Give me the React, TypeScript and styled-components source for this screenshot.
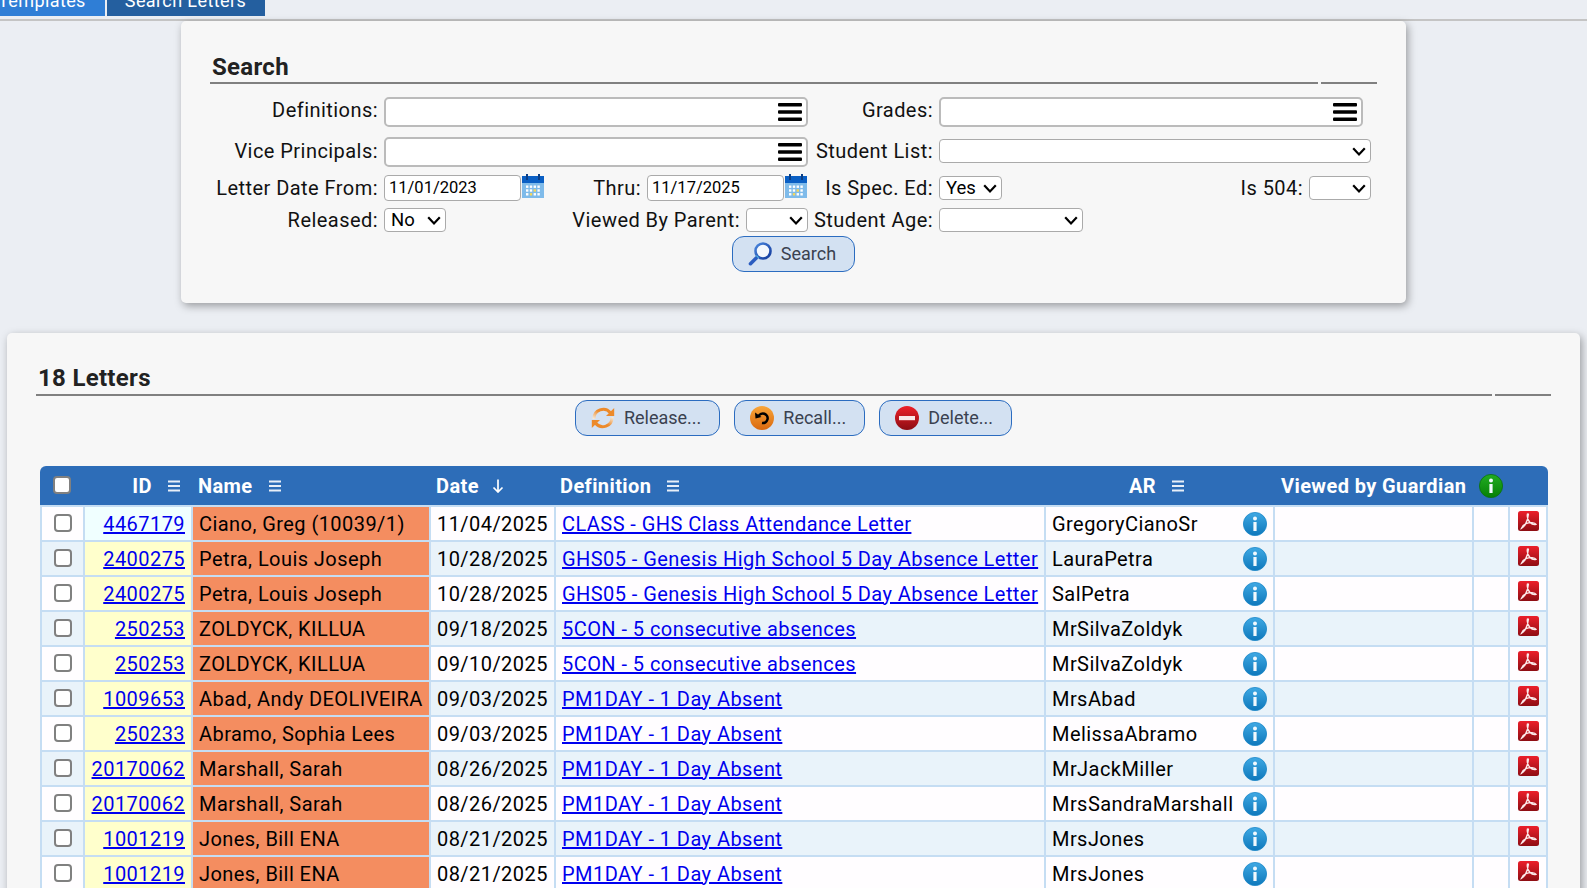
import React from "react";
import styled, { createGlobalStyle } from "styled-components";

const Global = createGlobalStyle`
  html, body { margin: 0; padding: 0; height: 100%; overflow: hidden; background: #ebeef3; }
  body { font-family: Roboto, "Liberation Sans", sans-serif; color: #000; }
  #root { height: 100%; overflow: hidden; }
`;

const chevron =
  "data:image/svg+xml;utf8,<svg xmlns='http://www.w3.org/2000/svg' width='14' height='9' viewBox='0 0 14 9'><path d='M1.2 1.2L7 7.4L12.8 1.2' fill='none' stroke='%23000' stroke-width='2.2'/></svg>";

const TopBar = styled.div`
  display: flex;
  height: 19px;
  gap: 2px;
  margin-left: -20px;
  border-bottom: 2px solid #c4c4c4;
`;
const Tab = styled.div<{ $dark?: boolean }>`
  height: 16px;
  overflow: hidden;
  display: flex;
  align-items: flex-end;
  padding: 0 19px 6px 18px;
  box-sizing: border-box;
  font-size: 18px;
  line-height: 18px;
  letter-spacing: 0.4px;
  color: #fff;
  background: ${(p) => (p.$dark ? "#245f9f" : "#2f7ed6")};
`;
const Panel = styled.section<{ $wide?: boolean }>`
  box-sizing: border-box;
  background: #f7f7f7;
  border-radius: 5px;
  padding: 0 29px;
  box-shadow: 2px 3px 8px rgba(0, 0, 0, 0.35);
  margin: ${(p) => (p.$wide ? "30px 7px 0" : "0 auto")};
  width: ${(p) => (p.$wide ? "auto" : "1225px")};
  height: ${(p) => (p.$wide ? "700px" : "282px")};
`;
const TitleRow = styled.div`
  display: flex;
  gap: 3px;
  height: 63px;
`;
const Title = styled.h2<{ $top: number }>`
  flex: 1;
  margin: 0;
  box-sizing: border-box;
  height: 63px;
  padding: ${(p) => p.$top}px 0 0 2px;
  font-size: 24px;
  line-height: 30px;
  font-weight: 700;
  letter-spacing: 0.3px;
  color: #222;
  border-bottom: 2px solid #808080;
`;
const TitleEnd = styled.div`
  width: 56px;
  border-bottom: 2px solid #808080;
`;
const FormRow = styled.div<{ $h: number; $top: number }>`
  display: flex;
  align-items: center;
  height: ${(p) => p.$h}px;
  margin-top: ${(p) => p.$top}px;
`;
const Label = styled.label<{ $w: number; $lift?: number }>`
  flex: none;
  box-sizing: border-box;
  width: ${(p) => p.$w}px;
  margin-right: 6px;
  padding-bottom: ${(p) => (p.$lift || 0) * 2}px;
  text-align: right;
  font-size: 20px;
  letter-spacing: 0.45px;
  white-space: nowrap;
  color: #111;
`;
const MultiBox = styled.div<{ $w: number }>`
  flex: none;
  box-sizing: border-box;
  width: ${(p) => p.$w}px;
  height: 30px;
  border: 2px solid #bbb;
  border-radius: 5px;
  background: #fff;
  display: flex;
  align-items: center;
  justify-content: flex-end;
  padding-right: 4px;
`;
const Select = styled.select<{ $w: number; $lift?: number }>`
  flex: none;
  box-sizing: border-box;
  appearance: none;
  width: ${(p) => p.$w}px;
  height: 24px;
  margin-bottom: ${(p) => (p.$lift || 0) * 2}px;
  padding: 0 0 0 6px;
  border: 1px solid #aaa;
  border-radius: 4px;
  background: #fff url("${chevron}") no-repeat right 4px center;
  font-family: Roboto, sans-serif;
  font-size: 18.5px;
  color: #000;
`;
const DateInput = styled.input`
  flex: none;
  box-sizing: border-box;
  width: 137px;
  height: 26px;
  padding: 0 3px 2px 4px;
  border: 1px solid #aaa;
  border-radius: 4px;
  background: #fff;
  font-family: Roboto, sans-serif;
  font-size: 16.5px;
  color: #000;
`;
const CalendarWrap = styled.span`
  flex: none;
  width: 22px;
  height: 24px;
  margin-left: 1px;
  align-self: flex-start;
`;
const ButtonRow = styled.div<{ $h: number; $top: number }>`
  display: flex;
  justify-content: center;
  gap: 14px;
  height: ${(p) => p.$h}px;
  margin-top: ${(p) => p.$top}px;
`;
const ActionButton = styled.button`
  box-sizing: border-box;
  height: 36px;
  display: inline-flex;
  align-items: center;
  gap: 9px;
  padding: 0 18px 2px 15px;
  border: 1.5px solid #2b6cc0;
  border-radius: 12px;
  background: #d3e1f2;
  font-family: Roboto, sans-serif;
  font-size: 18px;
  color: #3a4150;
  svg { margin-top: 2px; }
`;
const Table = styled.table`
  box-sizing: border-box;
  width: 1508px;
  margin: 30px 0 0 4px;
  table-layout: fixed;
  border-collapse: separate;
  border-spacing: 0;
  font-size: 20px;
  letter-spacing: 0.44px;
`;
const Th = styled.th<{ $first?: boolean; $last?: boolean }>`
  box-sizing: border-box;
  height: 41px;
  padding: 0;
  background: #2d6db8;
  border-bottom: 2px solid #c5ddf3;
  border-top-left-radius: ${(p) => (p.$first ? "6px" : "0")};
  border-top-right-radius: ${(p) => (p.$last ? "6px" : "0")};
  color: #fff;
  font-weight: 700;
  font-size: 20px;
  letter-spacing: 0.4px;
`;
const ThInner = styled.div<{ $align: string; $pad?: string; $gap?: number }>`
  display: flex;
  align-items: center;
  justify-content: ${(p) => p.$align};
  gap: ${(p) => p.$gap ?? 16}px;
  padding: ${(p) => p.$pad || "0"};
  white-space: nowrap;
`;
const Td = styled.td<{ $bg?: string; $first?: boolean; $right?: boolean }>`
  box-sizing: border-box;
  height: 35px;
  padding: 0 6px;
  border-right: 2px solid #c5ddf3;
  border-bottom: 2px solid #c5ddf3;
  border-left: ${(p) => (p.$first ? "2px solid #c5ddf3" : "0")};
  background: ${(p) => p.$bg || "transparent"};
  text-align: ${(p) => (p.$right ? "right" : "left")};
  white-space: nowrap;
  overflow: hidden;
`;
const Tr = styled.tr<{ $even: boolean }>`
  background: ${(p) => (p.$even ? "#e9f3fa" : "#fffdff")};
`;
const Link = styled.a`
  color: #0000ee;
  text-decoration: underline;
`;
const Check = styled.input`
  display: block;
  appearance: none;
  box-sizing: border-box;
  width: 18px;
  height: 18px;
  margin: 0 0 2px 6px;
  border: 2px solid #808080;
  border-radius: 4px;
  background: #fff;
`;
const HeadCheck = styled(Check)`
  margin: 0 0 1px 13px;
`;
const ArCell = styled.div`
  display: flex;
  align-items: center;
  justify-content: space-between;
`;
const PdfWrap = styled.div`
  height: 33px;
  padding-top: 4px;
  box-sizing: border-box;
  margin-left: 2px;
`;
const Svg = styled.svg`
  display: block;
  flex: none;
`;

const Hamburger = () => (
  <Svg width="24" height="18" viewBox="0 0 24 18">
    <rect y="0" width="24" height="3.4" rx="1" fill="#000" />
    <rect y="7.3" width="24" height="3.4" rx="1" fill="#000" />
    <rect y="14.6" width="24" height="3.4" rx="1" fill="#000" />
  </Svg>
);
const MenuLines = () => (
  <Svg width="12" height="12" viewBox="0 0 12 12">
    <path d="M0 1.5H12M0 6H12M0 10.5H12" stroke="#e8eff8" strokeWidth="2" />
  </Svg>
);
const DownArrow = () => (
  <Svg width="12" height="14" viewBox="0 0 12 14">
    <path d="M6 0.5V13M1.5 8.5L6 13L10.5 8.5" stroke="#fff" strokeWidth="1.7" fill="none" />
  </Svg>
);
const Calendar = () => (
  <CalendarWrap>
    <Svg width="22" height="24" viewBox="0 0 22 24">
      <rect y="2" width="22" height="22" fill="#7fbbea" />
      <rect y="2" width="22" height="7" fill="#0a5fc4" />
      <rect x="4" y="0" width="2" height="6" fill="#0b3f86" />
      <rect x="16" y="0" width="2" height="6" fill="#0b3f86" />
      {[0, 1, 2, 3].flatMap((c) =>
        [0, 1, 2].map((r) => (
          <rect
            key={`${c}-${r}`}
            x={4 + c * 3.8}
            y={11.5 + r * 3.8}
            width="2.4"
            height="2.4"
            fill={(c === 1 && r === 2) || (c === 2 && r === 1) ? "#f7d85a" : "#fff"}
          />
        ))
      )}
    </Svg>
  </CalendarWrap>
);
const Magnifier = () => (
  <Svg width="24" height="24" viewBox="0 0 24 24">
    <defs>
      <linearGradient id="ring" x1="0" y1="0" x2="1" y2="1">
        <stop offset="0" stopColor="#4a86dd" />
        <stop offset="1" stopColor="#123a9c" />
      </linearGradient>
    </defs>
    <circle cx="15" cy="9" r="7.5" fill="#f4f8fd" stroke="url(#ring)" strokeWidth="2.6" />
    <path d="M9.8 14.4L8 16.2" stroke="#58c8e8" strokeWidth="3" />
    <path d="M8 16.2L2.5 21.7" stroke="#2a5cc0" strokeWidth="3.6" strokeLinecap="round" />
  </Svg>
);
const Sync = () => (
  <Svg width="24" height="24" viewBox="0 0 24 24">
    <defs>
      <linearGradient id="syncTop" x1="0" y1="1" x2="1" y2="0">
        <stop offset="0" stopColor="#f6ead9" />
        <stop offset="0.55" stopColor="#ec8a2a" />
      </linearGradient>
      <linearGradient id="syncBot" x1="0" y1="1" x2="1" y2="0">
        <stop offset="0.45" stopColor="#ec8a2a" />
        <stop offset="1" stopColor="#f6ead9" />
      </linearGradient>
    </defs>
    <path d="M3 13A9.2 9.2 0 0 1 19.5 7" fill="none" stroke="url(#syncTop)" strokeWidth="3" />
    <path d="M21 11A9.2 9.2 0 0 1 4.5 17" fill="none" stroke="url(#syncBot)" strokeWidth="3" />
    <path d="M23.2 2V10H15z" fill="#ec8a2a" />
    <path d="M0.8 22V14H9z" fill="#ec8a2a" />
  </Svg>
);
const Recall = () => (
  <Svg width="24" height="24" viewBox="0 0 24 24">
    <defs>
      <linearGradient id="recall" x1="0" y1="0" x2="0" y2="1">
        <stop offset="0" stopColor="#f9a63a" />
        <stop offset="1" stopColor="#d9680f" />
      </linearGradient>
    </defs>
    <circle cx="12" cy="12" r="12" fill="url(#recall)" />
    <path d="M8.5 10.2A4.8 4.8 0 1 1 12 17" fill="none" stroke="#000" strokeWidth="2.5" />
    <path d="M5 6.5L5.5 12.6L11.5 11z" fill="#000" />
  </Svg>
);
const Stop = () => (
  <Svg width="24" height="24" viewBox="0 0 24 24">
    <defs>
      <linearGradient id="stop" x1="0" y1="0" x2="0" y2="1">
        <stop offset="0" stopColor="#ee2028" />
        <stop offset="1" stopColor="#8b0d14" />
      </linearGradient>
    </defs>
    <circle cx="12" cy="12" r="12" fill="url(#stop)" />
    <rect x="4" y="10" width="16" height="4.2" fill="#f8e8e8" />
  </Svg>
);
const Info = ({ green }: { green?: boolean }) => {
  const id = green ? "infoG" : "infoB";
  return (
    <Svg width="24" height="24" viewBox="0 0 24 24">
      <defs>
        <linearGradient id={id} x1="0" y1="0" x2="0" y2="1">
          <stop offset="0" stopColor={green ? "#22ad22" : "#3fa9e4"} />
          <stop offset="1" stopColor={green ? "#068006" : "#0f78bb"} />
        </linearGradient>
      </defs>
      <circle cx="12" cy="12" r="11.6" fill={`url(#${id})`} stroke={green ? "#0b6e12" : "#1b86c8"} strokeWidth="0.8" />
      <circle cx="12" cy="6.6" r="2" fill="#f2f9fd" />
      <rect x="10.4" y="10" width="3.2" height="9" fill="#f2f9fd" />
    </Svg>
  );
};
const Pdf = () => (
  <Svg width="21" height="20" viewBox="0 0 21 20">
    <defs>
      <linearGradient id="pdf" x1="0" y1="0" x2="0" y2="1">
        <stop offset="0" stopColor="#ec1f2a" />
        <stop offset="1" stopColor="#8e0d13" />
      </linearGradient>
    </defs>
    <rect width="21" height="20" rx="2.5" fill="url(#pdf)" />
    <path
      d="M9.5 3C8.8 6 9.8 9 12 11.5C13.5 13 16 14 18 13.4C17 11.4 12 11 8 12.6C5.5 13.6 4 15.6 3.4 17.4C6.5 16 9.8 10 10.4 3.2C10.2 2.8 9.8 2.8 9.5 3Z"
      fill="none"
      stroke="#fbeaea"
      strokeWidth="1.4"
    />
  </Svg>
);

const rows = [
  ["4467179", "Ciano, Greg (10039/1)", "11/04/2025", "CLASS - GHS Class Attendance Letter", "GregoryCianoSr"],
  ["2400275", "Petra, Louis Joseph", "10/28/2025", "GHS05 - Genesis High School 5 Day Absence Letter", "LauraPetra"],
  ["2400275", "Petra, Louis Joseph", "10/28/2025", "GHS05 - Genesis High School 5 Day Absence Letter", "SalPetra"],
  ["250253", "ZOLDYCK, KILLUA", "09/18/2025", "5CON - 5 consecutive absences", "MrSilvaZoldyk"],
  ["250253", "ZOLDYCK, KILLUA", "09/10/2025", "5CON - 5 consecutive absences", "MrSilvaZoldyk"],
  ["1009653", "Abad, Andy DEOLIVEIRA", "09/03/2025", "PM1DAY - 1 Day Absent", "MrsAbad"],
  ["250233", "Abramo, Sophia Lees", "09/03/2025", "PM1DAY - 1 Day Absent", "MelissaAbramo"],
  ["20170062", "Marshall, Sarah", "08/26/2025", "PM1DAY - 1 Day Absent", "MrJackMiller"],
  ["20170062", "Marshall, Sarah", "08/26/2025", "PM1DAY - 1 Day Absent", "MrsSandraMarshall"],
  ["1001219", "Jones, Bill ENA", "08/21/2025", "PM1DAY - 1 Day Absent", "MrsJones"],
  ["1001219", "Jones, Bill ENA", "08/21/2025", "PM1DAY - 1 Day Absent", "MrsJones"],
];
const widths = [45, 108, 238, 125, 490, 229, 199, 36, 38];

export default function App() {
  return (
    <>
      <Global />
      <TopBar>
        <Tab>Templates</Tab>
        <Tab $dark>Search Letters</Tab>
      </TopBar>
      <Panel>
        <TitleRow>
          <Title $top={31}>Search</Title>
          <TitleEnd />
        </TitleRow>
        <FormRow $h={30} $top={13}>
          <Label $w={168} $lift={2}>Definitions:</Label>
          <MultiBox $w={424}><Hamburger /></MultiBox>
          <Label $w={125} $lift={2}>Grades:</Label>
          <MultiBox $w={424}><Hamburger /></MultiBox>
        </FormRow>
        <FormRow $h={30} $top={10}>
          <Label $w={168} $lift={1}>Vice Principals:</Label>
          <MultiBox $w={424}><Hamburger /></MultiBox>
          <Label $w={125} $lift={1}>Student List:</Label>
          <Select $w={432} $lift={1}><option></option></Select>
        </FormRow>
        <FormRow $h={28} $top={7}>
          <Label $w={168}>Letter Date From:</Label>
          <DateInput readOnly value="11/01/2023" />
          <Calendar />
          <Label $w={97}>Thru:</Label>
          <DateInput readOnly value="11/17/2025" />
          <Calendar />
          <Label $w={126}>Is Spec. Ed:</Label>
          <Select $w={63}><option>Yes</option></Select>
          <Label $w={301}>Is 504:</Label>
          <Select $w={62}><option></option></Select>
        </FormRow>
        <FormRow $h={24} $top={6}>
          <Label $w={168} $lift={0.5}>Released:</Label>
          <Select $w={62}><option>No</option></Select>
          <Label $w={294} $lift={0.5}>Viewed By Parent:</Label>
          <Select $w={62}><option></option></Select>
          <Label $w={125} $lift={0.5}>Student Age:</Label>
          <Select $w={144}><option></option></Select>
        </FormRow>
        <ButtonRow $h={36} $top={4}>
          <ActionButton><Magnifier />Search</ActionButton>
        </ButtonRow>
      </Panel>
      <Panel $wide>
        <TitleRow>
          <Title $top={30}>18 Letters</Title>
          <TitleEnd />
        </TitleRow>
        <ButtonRow $h={36} $top={4}>
          <ActionButton><Sync />Release...</ActionButton>
          <ActionButton><Recall />Recall...</ActionButton>
          <ActionButton><Stop />Delete...</ActionButton>
        </ButtonRow>
        <Table>
          <colgroup>
            {widths.map((w, i) => <col key={i} style={{ width: w }} />)}
          </colgroup>
          <thead>
            <tr>
              <Th $first><HeadCheck type="checkbox" readOnly /></Th>
              <Th><ThInner $align="flex-end" $pad="0 13px 0 0">ID<MenuLines /></ThInner></Th>
              <Th><ThInner $align="flex-start" $pad="0 0 0 5px">Name<MenuLines /></ThInner></Th>
              <Th><ThInner $align="flex-start" $pad="0 0 0 5px" $gap={13}>Date<DownArrow /></ThInner></Th>
              <Th><ThInner $align="flex-start" $pad="0 0 0 4px">Definition<MenuLines /></ThInner></Th>
              <Th><ThInner $align="center" $pad="0 8px 0 0">AR<MenuLines /></ThInner></Th>
              <Th colSpan={2}><ThInner $align="flex-start" $pad="0 0 0 6px" $gap={13}>Viewed by Guardian<Info green /></ThInner></Th>
              <Th $last />
            </tr>
          </thead>
          <tbody>
            {rows.map((r, i) => (
              <Tr key={i} $even={i % 2 === 1}>
                <Td $first><Check type="checkbox" readOnly /></Td>
                <Td $right $bg={i === 0 ? "#f0ffff" : "#ffffcc"}><Link>{r[0]}</Link></Td>
                <Td $bg="#f48d60">{r[1]}</Td>
                <Td>{r[2]}</Td>
                <Td><Link>{r[3]}</Link></Td>
                <Td><ArCell>{r[4]}<Info /></ArCell></Td>
                <Td />
                <Td />
                <Td><PdfWrap><Pdf /></PdfWrap></Td>
              </Tr>
            ))}
          </tbody>
        </Table>
      </Panel>
    </>
  );
}
